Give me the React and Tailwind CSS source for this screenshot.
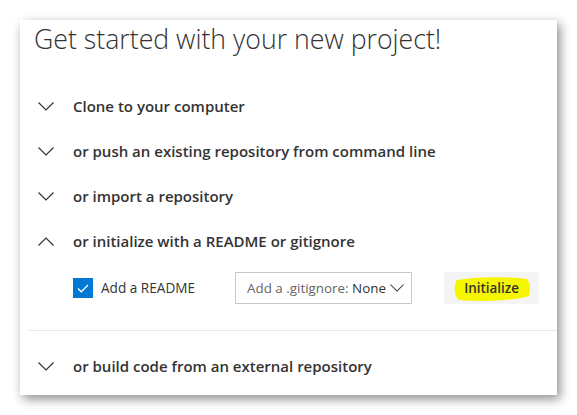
const font = { fontFamily: '"Open Sans", "Noto Sans", sans-serif' };

function Chevron({ up }) {
  return (
    <svg width="16" height="9" viewBox="0 0 16 9" className="shrink-0">
      <path
        d={up ? 'M0.5 8.5 L8 1 L15.5 8.5' : 'M0.5 0.5 L8 8 L15.5 0.5'}
        fill="none"
        stroke="#333"
        strokeWidth="1.2"
      />
    </svg>
  );
}

function Row({ label, up }) {
  return (
    <div className="h-[45px] flex items-center pl-[18px]">
      <Chevron up={up} />
      <span className="ml-[19px] text-[15px] font-semibold text-[#333]">{label}</span>
    </div>
  );
}

export default function App() {
  return (
    <div className="w-[577px] h-[415px] bg-white pt-[20px] pl-[20px]" style={font}>
      <div className="w-[537px] h-[375px] bg-white shadow-[3px_4px_10px_rgba(0,0,0,0.45)] flex flex-col">
        <h1 className="h-[63.5px] pl-[14px] pt-[1px] text-[26.7px] leading-[36px] font-light text-[#333]">
          Get started with your new project!
        </h1>
        <Row label="Clone to your computer" />
        <Row label="or push an existing repository from command line" />
        <Row label="or import a repository" />
        <Row label="or initialize with a README or gitignore" up />

        <div className="flex items-center pl-[53px] pt-[8.5px] h-[40.5px]">
          <div className="w-[20px] h-[20px] bg-[#0078d4] flex items-center justify-center shrink-0">
            <svg width="12" height="9" viewBox="0 0 12 9">
              <path d="M1 4.5 L4.3 7.8 L11 1" fill="none" stroke="#fff" strokeWidth="1.3" />
            </svg>
          </div>
          <span className="ml-[8px] w-[134px] text-[13.6px] text-[#333] whitespace-nowrap">Add a README</span>
          <div className="w-[177px] h-[32px] border border-[#c8c8c8] flex items-center pl-[11px] pr-[4px] text-[13.4px] whitespace-nowrap shrink-0">
            <span className="text-[#666]">Add a .gitignore:&nbsp;</span>
            <span className="text-[#333]">None</span>
            <svg width="14" height="8" viewBox="0 0 16 9" className="ml-auto mr-[3px]">
              <path d="M0.5 0.5 L8 8 L15.5 0.5" fill="none" stroke="#333" strokeWidth="1.2" />
            </svg>
          </div>
          <button className="ml-[32px] w-[95px] h-[32px] bg-[#f4f4f4] relative flex items-center justify-center shrink-0">
            <svg className="absolute left-[9px] top-[4px]" width="78" height="26" viewBox="0 0 78 26">
              <path
                d="M4 4 C20 1 50 0 74 3 C78 8 77 14 76 20 C60 25 30 26 6 24 C1 20 0 10 4 4 Z"
                fill="#f6f600"
              />
            </svg>
            <span className="relative text-[13.4px] font-semibold text-[#333]">Initialize</span>
          </button>
        </div>

        <div className="ml-[9px] mt-[26px] border-t border-[#e8e8e8]" />
        <div className="pt-[13px]">
          <Row label="or build code from an external repository" />
        </div>
      </div>
    </div>
  );
}
